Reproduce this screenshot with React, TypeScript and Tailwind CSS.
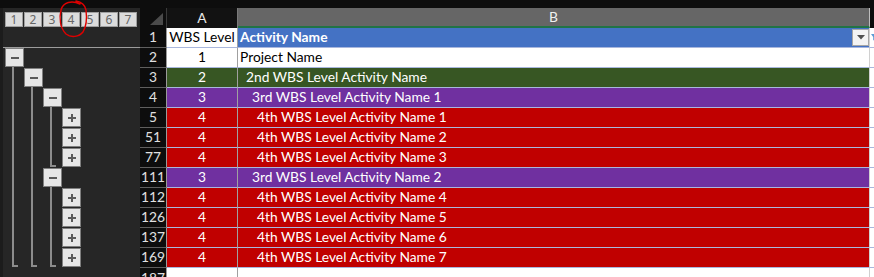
import React from 'react';

type Slot = 'minus' | 'plus' | 'line' | 'hook' | 'none';

type Row = {
  n: string;
  v: string;
  name: string;
  bg: string;
  fg: string;
  ind: string;
  slots: Slot[];
};

const rows: Row[] = [
  { n: '2', v: '1', name: 'Project Name', bg: 'bg-white', fg: 'text-black', ind: 'pl-[2px]', slots: ['minus', 'none', 'none', 'none'] },
  { n: '3', v: '2', name: '2nd WBS Level Activity Name', bg: 'bg-[#375623]', fg: 'text-white', ind: 'pl-[8px]', slots: ['line', 'minus', 'none', 'none'] },
  { n: '4', v: '3', name: '3rd WBS Level Activity Name 1', bg: 'bg-[#7030a0]', fg: 'text-white', ind: 'pl-[14px]', slots: ['line', 'line', 'minus', 'none'] },
  { n: '5', v: '4', name: '4th WBS Level Activity Name 1', bg: 'bg-[#c00000]', fg: 'text-white', ind: 'pl-[19px]', slots: ['line', 'line', 'line', 'plus'] },
  { n: '51', v: '4', name: '4th WBS Level Activity Name 2', bg: 'bg-[#c00000]', fg: 'text-white', ind: 'pl-[19px]', slots: ['line', 'line', 'line', 'plus'] },
  { n: '77', v: '4', name: '4th WBS Level Activity Name 3', bg: 'bg-[#c00000]', fg: 'text-white', ind: 'pl-[19px]', slots: ['line', 'line', 'hook', 'plus'] },
  { n: '111', v: '3', name: '3rd WBS Level Activity Name 2', bg: 'bg-[#7030a0]', fg: 'text-white', ind: 'pl-[14px]', slots: ['line', 'line', 'minus', 'none'] },
  { n: '112', v: '4', name: '4th WBS Level Activity Name 4', bg: 'bg-[#c00000]', fg: 'text-white', ind: 'pl-[19px]', slots: ['line', 'line', 'line', 'plus'] },
  { n: '126', v: '4', name: '4th WBS Level Activity Name 5', bg: 'bg-[#c00000]', fg: 'text-white', ind: 'pl-[19px]', slots: ['line', 'line', 'line', 'plus'] },
  { n: '137', v: '4', name: '4th WBS Level Activity Name 6', bg: 'bg-[#c00000]', fg: 'text-white', ind: 'pl-[19px]', slots: ['line', 'line', 'line', 'plus'] },
  { n: '169', v: '4', name: '4th WBS Level Activity Name 7', bg: 'bg-[#c00000]', fg: 'text-white', ind: 'pl-[19px]', slots: ['hook', 'hook', 'hook', 'plus'] },
];

function Btn({ kind }: { kind: 'minus' | 'plus' }) {
  return (
    <div className="w-[19px] h-[19px] bg-[#e6e6e6] border border-[#7f7f7f] flex items-center justify-center">
      <svg width="10" height="10" viewBox="0 0 10 10">
        <rect x="1" y="4" width="8" height="2" fill="#5a5a5a" />
        {kind === 'plus' && <rect x="4" y="1" width="2" height="8" fill="#5a5a5a" />}
      </svg>
    </div>
  );
}

function SlotView({ s }: { s: Slot }) {
  return (
    <div className="w-[19px] h-[20px] shrink-0 flex flex-col">
      {s === 'minus' && (
        <>
          <Btn kind="minus" />
          <div className="ml-[7px] w-[2px] h-[1px] bg-[#8c8c8c]" />
        </>
      )}
      {s === 'plus' && <Btn kind="plus" />}
      {s === 'line' && <div className="ml-[7px] w-[2px] h-[20px] bg-[#8c8c8c]" />}
      {s === 'hook' && <div className="ml-[7px] w-[6px] h-[19px] border-l-2 border-b-2 border-[#8c8c8c]" />}
    </div>
  );
}

const cellFont = "font-['Lato',sans-serif] text-[13.8px] leading-[16px]";

export default function App() {
  return (
    <div className="relative w-[874px] h-[277px] overflow-hidden bg-[#0d0d0d] flex flex-col">
      <div className="h-[8px] shrink-0 bg-[#0d0d0d]" />
      <div className="flex flex-1 min-h-0">
        {/* outline panel */}
        <div className="w-[140px] shrink-0 bg-[#262626] border-l-[3px] border-[#1c1c1c] flex flex-col">
          <div className="h-[20px] pt-[4px] pl-[2px] flex gap-[1px]">
            {['1', '2', '3', '4', '5', '6', '7'].map((d) => (
              <div
                key={d}
                className="w-[18px] h-[15px] bg-[#dcdcdc] border border-[#a0a0a0] flex items-center justify-center font-['Noto_Sans',sans-serif] text-[12px] leading-none text-[#666666]"
              >
                {d}
              </div>
            ))}
          </div>
          <div className="h-[19px]" />
          <div className="h-[1px] bg-[#9c9c9c]" />
          {rows.map((r) => (
            <div key={r.n} className="h-[20px] pl-[2px] flex">
              {r.slots.map((s, i) => (
                <SlotView key={i} s={s} />
              ))}
            </div>
          ))}
        </div>

        {/* sheet */}
        <div className="flex-1 flex flex-col">
          {/* column headers */}
          <div className="h-[20px] flex shrink-0">
            <div className="w-[27px] bg-[#0d0d0d] border-r border-[#3a3a3a] flex items-end justify-end pr-[3px] pb-[3px]">
              <svg width="13" height="12" viewBox="0 0 13 12">
                <polygon points="13,0 13,12 0,12" fill="#4b4b4b" />
              </svg>
            </div>
            <div className={`w-[71px] bg-[#121212] border-r border-[#7a7a7a] flex items-center justify-center text-[#e8e8e8] ${cellFont}`}>
              A
            </div>
            <div className={`w-[632px] bg-[#666666] border-r border-[#bdbdbd] border-b-2 border-b-[#217346] flex items-center justify-center text-[#f0f0f0] ${cellFont}`}>
              B
            </div>
            <div className="flex-1 bg-[#0d0d0d]" />
          </div>

          {/* row 1 */}
          <div className="h-[20px] flex shrink-0">
            <div className={`w-[27px] bg-[#0d0d0d] border-r border-[#9a9a9a] border-b border-b-[#5f5f5f] flex items-end justify-center pb-[2px] text-[#e0e0e0] ${cellFont}`}>
              1
            </div>
            <div className={`w-[71px] bg-white border-r border-[#a0a0a0] border-b border-b-[#a9b7dd] flex items-end justify-center pb-[2px] text-black whitespace-nowrap ${cellFont}`}>
              WBS Level
            </div>
            <div className={`w-[632px] bg-[#4472c4] border-r border-[#d0d0d0] border-b border-b-[#a9b7dd] flex items-center pl-[2px] text-white font-bold ${cellFont}`}>
              <span className="self-end pb-[2px]">Activity Name</span>
              <div className="ml-auto w-[17px] h-[17px] bg-[#f3f3f3] border border-[#a6a6a6] flex items-center justify-center">
                <svg width="8" height="5" viewBox="0 0 8 5">
                  <polygon points="0,0 8,0 4,4.5" fill="#505050" />
                </svg>
              </div>
            </div>
            <div className="flex-1 bg-white border-b border-[#a9b7dd] flex items-center pl-[1px]">
              <svg width="6" height="7" viewBox="0 0 6 7">
                <polygon points="0,0 6,0 3.8,3 3.8,7 2.2,6 2.2,3" fill="#5b9bd5" />
              </svg>
            </div>
          </div>

          {rows.map((r) => (
            <div key={r.n} className="h-[20px] flex shrink-0">
              <div className={`w-[27px] bg-[#0d0d0d] border-r border-[#9a9a9a] border-b border-b-[#5f5f5f] flex items-end justify-center pb-[2px] text-[#e0e0e0] ${cellFont}`}>
                {r.n}
              </div>
              <div className={`w-[71px] ${r.bg} ${r.fg} border-r border-[#a0a0a0] border-b border-b-[#a9b7dd] flex items-end justify-center pb-[2px] ${cellFont}`}>
                {r.v}
              </div>
              <div className={`w-[632px] ${r.bg} ${r.fg} ${r.ind} border-r border-[#d0d0d0] border-b border-b-[#a9b7dd] flex items-end pb-[2px] whitespace-nowrap ${cellFont}`}>
                {r.name}
              </div>
              <div className="flex-1 bg-white border-b border-[#a9b7dd]" />
            </div>
          ))}

          {/* row 187, partially visible */}
          <div className="h-[20px] flex shrink-0">
            <div className={`w-[27px] bg-[#0d0d0d] border-r border-[#9a9a9a] flex items-end justify-center pb-[2px] text-[#e0e0e0] ${cellFont}`}>
              187
            </div>
            <div className="w-[71px] bg-white border-r border-[#a0a0a0]" />
            <div className="w-[632px] bg-white border-r border-[#d0d0d0]" />
            <div className="flex-1 bg-white" />
          </div>
        </div>
      </div>

      {/* hand-drawn red circle annotation */}
      <svg className="absolute left-0 top-0 pointer-events-none" width="100" height="40" viewBox="0 0 100 40">
        <path
          d="M 80 4 C 72 0, 63 2, 61 10 C 59 18, 60 28, 66 34 C 71 38, 79 37, 83 32 C 86 27, 87 18, 86 10 C 85 5, 82 2, 76 1"
          fill="none"
          stroke="#e00000"
          strokeWidth="1.4"
          strokeLinecap="round"
        />
      </svg>
    </div>
  );
}
